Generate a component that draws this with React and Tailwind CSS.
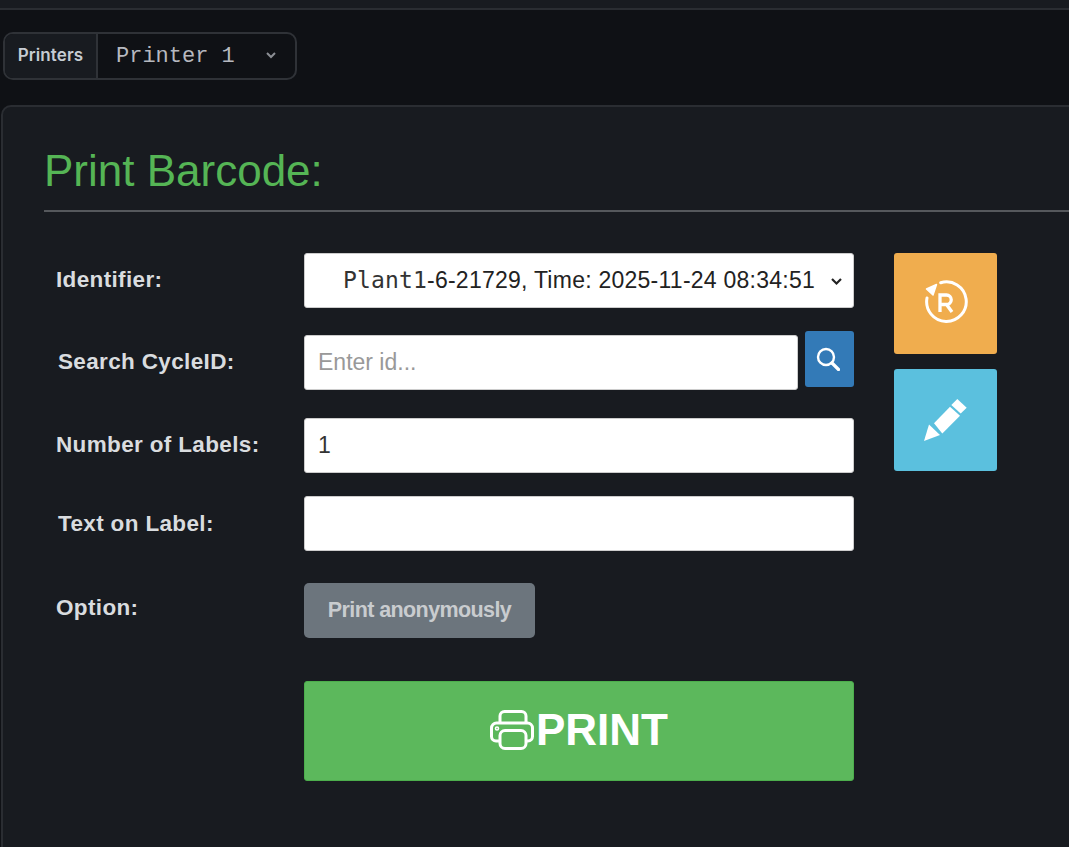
import React from 'react';

const sans = 'font-["Liberation_Sans",Arial,sans-serif]';

const FormRow = ({ label, labelClass, className, children }) => (
  <div className={`flex ${className}`}>
    <div className={`w-[260px] shrink-0 text-[22.5px] font-bold tracking-[0.35px] text-[#d9dcdf] ${labelClass}`}>{label}</div>
    <div className="w-[550px] shrink-0">{children}</div>
  </div>
);

const inputClass = `block h-[55px] rounded-[3px] border border-[#ccc] bg-white px-[13px] text-[23px] text-[#333] ${sans}`;

const PrintIcon = () => (
  <svg className="mb-[1px] mr-[2px]" width="44" height="40" viewBox="0 0 44 40" fill="none" stroke="currentColor" strokeWidth="3">
    <path d="M10 13V6a4.500 4.500 0 0 1 4.500-4.500h17A4.500 4.500 0 0 1 36 6v7" />
    <path d="M10 31H6a4.500 4.500 0 0 1-4.500-4.500V18A5 5 0 0 1 6.500 13h31a5 5 0 0 1 5 5v8.500A4.500 4.500 0 0 1 38 31h-2" />
    <rect x="10" y="20.500" width="26" height="18" rx="5" />
    <circle cx="7" cy="18.500" r="0.800" />
  </svg>
);

const ResetIcon = () => (
  <svg className="mb-[4px]" width="44" height="44" viewBox="0 0 44 44" fill="none" stroke="currentColor">
    <path d="M16.700 2.700A19.800 19.800 0 1 1 3 18" strokeWidth="3" strokeLinecap="round" />
    <path d="M2.500 9L12.500 4.500 9 15z" fill="currentColor" stroke="currentColor" strokeWidth="1.500" strokeLinejoin="round" />
    <path d="M16 32V15h6.500a4.700 4.700 0 0 1 0 9.500H16M22.500 24.500l5.500 7.500" strokeWidth="3.300" />
  </svg>
);

const PencilIcon = () => (
  <svg className="mb-[1px]" width="43" height="42" viewBox="0 0 43 42" fill="currentColor">
    <path d="M27.300 6L33.300 0 42.700 8.700 36.700 14.400z" />
    <path d="M10 24.300L26 7.700 36 16.700 18.300 34.400z" />
    <path d="M0 42L5 25.400 16 36z" />
  </svg>
);

const SearchIcon = () => (
  <svg className="mr-[4px]" width="24" height="24" viewBox="0 0 24 24" fill="none" stroke="currentColor">
    <circle cx="10" cy="10" r="8" strokeWidth="2.400" />
    <path d="M16 16l6.500 6.500" strokeWidth="3.200" strokeLinecap="round" />
  </svg>
);

const App = () => {
  return (
    <div className={`h-[847px] w-[1069px] overflow-hidden bg-[#0f1115] ${sans}`}>
      <div className="h-[10px] border-b-2 border-[#2a2d32] bg-[#181b20]" />

      <div className="ml-[3px] mt-[22px] flex h-[48px] w-[294px] overflow-hidden rounded-[10px] border-2 border-[#2f3237]">
        <div className="flex w-[93px] items-center justify-center border-r-2 border-[#2f3237] bg-[#181b20] font-['Inter',sans-serif] text-[17px] font-semibold tracking-[0.1px] text-[#c6ccd3]">
          Printers
        </div>
        <div className="relative flex flex-1 items-center pl-[18px] font-['Liberation_Mono',monospace] text-[22px] text-[#b6b8bf]">
          Printer 1
          <svg className="absolute right-[19px] top-[18px] text-[#8b8e94]" width="10" height="7" viewBox="0 0 10 7" fill="none" stroke="currentColor" strokeWidth="2">
            <path d="M1 1l4 4 4-4" />
          </svg>
        </div>
      </div>

      <div className="ml-[1px] mt-[25px] h-[760px] w-[1100px] rounded-t-[10px] border-2 border-[#2a2d32] bg-[#181b20] pl-[41px] pt-[35px]">
        <h1 className="h-[68px] text-[44px] font-normal leading-[58px] text-[#55b555]">Print Barcode:</h1>
        <div className="h-[2px] bg-[#55585c]" />

        <div className="mt-[41px] flex">
          <div>
            <FormRow label="Identifier:" labelClass="pl-[12px] pt-[10px]" className="h-[78px]">
              <div className="relative">
                <div className={`${inputClass} flex w-[550px] items-center pl-[38px]`}>
                  <span className="font-['DejaVu_Sans_Mono',monospace] text-[23px] tracking-[0.15px] text-[#333]">Plant1</span>
                  <span className="tracking-[0.25px] text-[#222]">-6-21729, Time: 2025-11-24 08:34:51</span>
                </div>
                <svg className="absolute right-[12px] top-[25px] text-[#222]" width="11" height="8" viewBox="0 0 11 8" fill="none" stroke="currentColor" strokeWidth="2.200">
                  <path d="M1 1l4.500 4.500L10 1" />
                </svg>
              </div>
            </FormRow>
            <FormRow label="Search CycleID:" labelClass="pl-[14px] pt-[14px]" className="h-[87px]">
              <div className="flex items-start gap-[7px]">
                <input className={`${inputClass} mt-[4px] w-[494px] placeholder:text-[#999]`} placeholder="Enter id..." readOnly />
                <button className="flex h-[56px] w-[49px] items-center justify-center rounded-[3px] bg-[#337ab7] text-white">
                  <SearchIcon />
                </button>
              </div>
            </FormRow>
            <FormRow label="Number of Labels:" labelClass="pl-[12px] pt-[10px]" className="h-[78px]">
              <input className={`${inputClass} w-[550px] font-normal`} value="1" readOnly />
            </FormRow>
            <FormRow label="Text on Label:" labelClass="pl-[14px] pt-[11px]" className="h-[87px]">
              <input className={`${inputClass} w-[550px]`} value="" readOnly />
            </FormRow>
            <FormRow label="Option:" labelClass="pl-[12px] pt-[8px]" className="h-[98px]">
              <button className="h-[55px] w-[231px] rounded-[5px] bg-[#6c757d] text-[21.500px] font-bold tracking-[-0.600px] text-[#c9cccf]">
                Print anonymously
              </button>
            </FormRow>
            <FormRow label="" className="h-[100px]">
              <button className="flex h-[100px] w-[550px] items-center justify-center rounded-[3px] border border-[#4cae4c] bg-[#5cb85c] pb-[2px] text-[44px] font-bold text-white">
                <PrintIcon />
                PRINT
              </button>
            </FormRow>
          </div>

          <div className="ml-[40px] flex w-[103px] flex-col gap-[15px]">
            <button className="flex h-[101px] items-center justify-center rounded-[3px] bg-[#f0ad4e] text-white">
              <ResetIcon />
            </button>
            <button className="flex h-[102px] items-center justify-center rounded-[3px] bg-[#5bc0de] text-white">
              <PencilIcon />
            </button>
          </div>
        </div>
      </div>
    </div>
  );
};

export default App;
